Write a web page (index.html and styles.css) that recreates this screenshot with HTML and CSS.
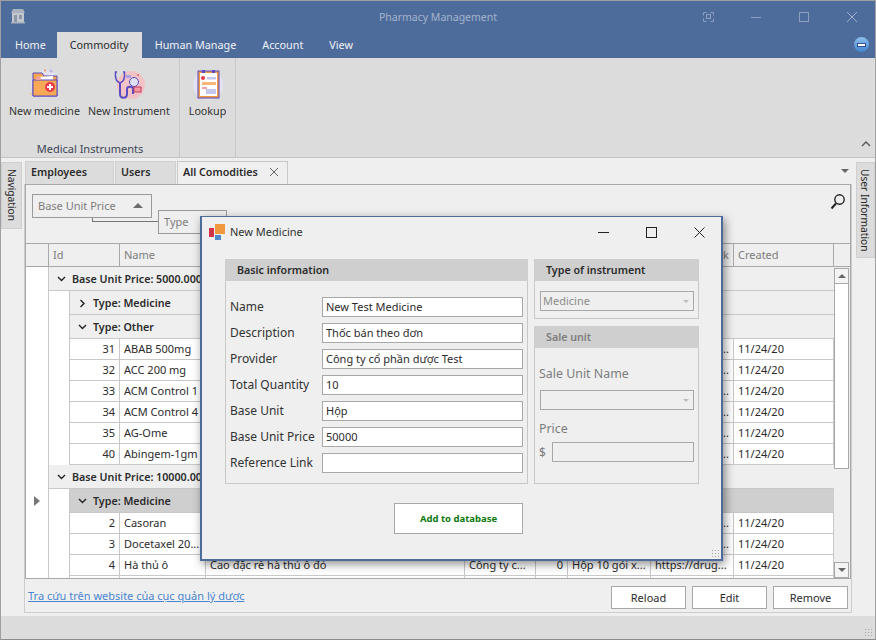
FILE: index.html
```html
<!DOCTYPE html>
<html lang="en">
<head>
    <meta charset="UTF-8">
    <title>Pharmacy Management</title>
    <link rel="stylesheet" href="styles.css">
</head>
<body>
<div class="app">
    <header class="titlebar">
        <svg class="app-icon" width="16" height="16" viewBox="0 0 16 16">
            <path d="M3 1h10l2 4H1z" fill="#a9b2be"/>
            <rect x="2" y="5" width="12" height="9" fill="#c3c8ce"/>
            <rect x="4" y="7" width="3" height="7" fill="#8b97a8"/>
            <rect x="9" y="7" width="3" height="4" fill="#8b97a8"/>
            <rect x="1" y="14" width="14" height="1.5" fill="#a9b2be"/>
        </svg>
        <div class="title">Pharmacy Management</div>
        <div class="win-controls">
            <svg width="48" height="16" viewBox="0 0 48 16" fill="none" stroke="#8c9fbd">
                <path d="M19.500 6.500v-3h3M26.500 3.500h3v3M29.500 9.500v3h-3M22.500 12.500h-3v-3"/>
                <rect x="22.500" y="5.500" width="4" height="4"/>
            </svg>
            <svg width="48" height="16" viewBox="0 0 48 16" fill="none" stroke="#8c9fbd"><path d="M19 8.500h10"/></svg>
            <svg width="48" height="16" viewBox="0 0 48 16" fill="none" stroke="#8c9fbd"><rect x="19.500" y="3.500" width="9" height="9"/></svg>
            <svg width="48" height="16" viewBox="0 0 48 16" fill="none" stroke="#a3b2cb"><path d="M19 3l10 10M29 3L19 13"/></svg>
        </div>
    </header>

    <nav class="menu">
        <a class="menu-item menu-home">Home</a>
        <a class="menu-item active">Commodity</a>
        <a class="menu-item">Human Manage</a>
        <a class="menu-item">Account</a>
        <a class="menu-item">View</a>
        <span class="menu-collapse"><span class="menu-collapse-bar"></span></span>
    </nav>

    <section class="ribbon">
        <div class="ribbon-group group-medical">
            <div class="ribbon-buttons">
                <div class="ribbon-btn btn-medicine">
                    <svg width="32" height="32" viewBox="0 0 32 32">
                        <circle cx="16" cy="15" r="14" fill="#e3e2f0"/>
                        <path d="M4 4h9l2 3h13v20H4z" fill="#f5a34e" stroke="#5a4bc0" stroke-width="1"/>
                        <path d="M8 8l16-1v4H8z" fill="#fff"/>
                        <path d="M4 11h24v16H4z" fill="#f7a958" stroke="#5a4bc0" stroke-width="1"/>
                        <path d="M7 9c1-2 4-2 5 0v2H7z" fill="#f0a0a0"/>
                        <circle cx="21" cy="18" r="5" fill="#e8394b"/>
                        <path d="M21 15v6M18 18h6" stroke="#fff" stroke-width="2"/>
                        <circle cx="22" cy="2" r="1.500" fill="#b9b6e6"/>
                        <circle cx="16" cy="1.500" r="1" fill="#f08b4a"/>
                        <circle cx="1.500" cy="25" r="1" fill="#f5c27e"/>
                    </svg>
                    <span>New medicine</span>
                </div>
                <div class="ribbon-btn btn-instrument">
                    <svg width="32" height="32" viewBox="0 0 32 32">
                        <circle cx="18" cy="16" r="14" fill="#f1c3c6"/>
                        <path d="M4 3H2.500C2 9 3 13 7 14c4-1 5-5 4.500-11H10" fill="none" stroke="#5a4bc0" stroke-width="1.500"/>
                        <path d="M7 14v11c0 5 7 5 7 0v-5c0-3 6-3 6 0v5" fill="none" stroke="#5a4bc0" stroke-width="2"/>
                        <circle cx="21" cy="13" r="4.500" fill="#dfe0f5" stroke="#5a4bc0"/>
                        <rect x="21" y="18" width="7" height="5" fill="#f19aa1" stroke="#c33b60"/>
                        <rect x="13" y="6" width="5" height="3" fill="#a9a4e0"/>
                        <circle cx="25" cy="6" r="1" fill="#e8606c"/>
                    </svg>
                    <span>New Instrument</span>
                </div>
            </div>
            <div class="ribbon-caption">Medical Instruments</div>
        </div>
        <div class="ribbon-group group-lookup">
            <div class="ribbon-btn btn-lookup">
                <svg width="32" height="32" viewBox="0 0 32 32">
                    <circle cx="16" cy="16" r="15" fill="#e2e2f2"/>
                    <rect x="7" y="3" width="19" height="25" fill="#fff" stroke="#f09a45" stroke-width="2"/>
                    <rect x="6" y="2" width="21" height="27" fill="none" stroke="#5a4bc0"/>
                    <rect x="10" y="1" width="3" height="3" fill="#5a4bc0"/>
                    <rect x="20" y="1" width="3" height="3" fill="#5a4bc0"/>
                    <circle cx="11" cy="9" r="2" fill="#e8394b"/>
                    <rect x="15" y="8" width="9" height="2.500" fill="#c4c6ee"/>
                    <rect x="10" y="13" width="14" height="3" fill="#f6b778"/>
                    <rect x="10" y="18" width="5" height="2" fill="#f0a0a0"/>
                    <rect x="14" y="20" width="10" height="5" fill="#c4c6ee"/>
                </svg>
                <span>Lookup</span>
            </div>
        </div>
        <svg class="ribbon-toggle" width="10" height="6" viewBox="0 0 10 6" fill="none" stroke="#555" stroke-width="1.300"><path d="M1 5l4-4 4 4"/></svg>
    </section>

    <main class="workspace">
        <div class="side-tab side-left">Navigation</div>

        <div class="center">
            <div class="doc-tabs">
                <div class="doc-tab tab-employees">Employees</div>
                <div class="doc-tab tab-users">Users</div>
                <div class="doc-tab tab-commodities active">All Comodities
                    <svg width="10" height="10" viewBox="0 0 10 10" fill="none" stroke="#666"><path d="M1 1l8 8M9 1l-8 8"/></svg>
                </div>
                <span class="tabs-menu"></span>
            </div>

            <div class="panel">
                <div class="grid">
                    <div class="filter-area">
                        <div class="chip chip-price">Base Unit Price<span class="sort-up"></span></div>
                        <div class="chip chip-type">Type</div>
                        <span class="chip-link"></span>
                        <svg class="search-icon" width="16" height="17" viewBox="0 0 16 17" fill="none" stroke="#222">
                            <circle cx="9.500" cy="6.500" r="4.700" stroke-width="1.400"/>
                            <path d="M6 10.500l-4.500 5" stroke-width="2"/>
                        </svg>
                    </div>

                    <div class="grid-head">
                        <div class="head-cell col-indicator"></div>
                        <div class="head-cell col-id">Id</div>
                        <div class="head-cell col-name">Name</div>
                        <div class="head-cell col-desc"></div>
                        <div class="head-cell col-provider"></div>
                        <div class="head-cell col-qty"></div>
                        <div class="head-cell col-unit"></div>
                        <div class="head-cell col-link col-link-right">Link</div>
                        <div class="head-cell col-created">Created</div>
                        <div class="head-cell col-end"></div>
                    </div>

                    <div class="grid-body">
                        <div class="indicator"><span class="row-arrow"></span></div>
                        <div class="rows">
                            <div class="group-row"><svg class="chev" width="9" height="6" viewBox="0 0 9 6" fill="none" stroke="#222" stroke-width="1.400"><path d="M1 1l3.500 3.500L8 1"/></svg>Base Unit Price: 5000.000</div>
                            <div class="group-row type-row"><svg class="chev" width="6" height="9" viewBox="0 0 6 9" fill="none" stroke="#222" stroke-width="1.400"><path d="M1 1l3.500 3.500L1 8"/></svg>Type: Medicine</div>
                            <div class="group-row type-row"><svg class="chev" width="9" height="6" viewBox="0 0 9 6" fill="none" stroke="#222" stroke-width="1.400"><path d="M1 1l3.500 3.500L8 1"/></svg>Type: Other</div>
                            <div class="data-row"><span class="num">31</span><span>ABAB 500mg</span><span></span><span></span><span></span><span></span><span class="cut">...</span><span>11/24/20</span></div>
                            <div class="data-row"><span class="num">32</span><span>ACC 200 mg</span><span></span><span></span><span></span><span></span><span class="cut">...</span><span>11/24/20</span></div>
                            <div class="data-row"><span class="num">33</span><span>ACM Control 1</span><span></span><span></span><span></span><span></span><span class="cut">...</span><span>11/24/20</span></div>
                            <div class="data-row"><span class="num">34</span><span>ACM Control 4</span><span></span><span></span><span></span><span></span><span class="cut">...</span><span>11/24/20</span></div>
                            <div class="data-row"><span class="num">35</span><span>AG-Ome</span><span></span><span></span><span></span><span></span><span class="cut">...</span><span>11/24/20</span></div>
                            <div class="data-row"><span class="num">40</span><span>Abingem-1gm</span><span></span><span></span><span></span><span></span><span class="cut">...</span><span>11/24/20</span></div>
                            <div class="group-row"><svg class="chev" width="9" height="6" viewBox="0 0 9 6" fill="none" stroke="#222" stroke-width="1.400"><path d="M1 1l3.500 3.500L8 1"/></svg>Base Unit Price: 10000.000</div>
                            <div class="group-row type-row selected"><svg class="chev" width="9" height="6" viewBox="0 0 9 6" fill="none" stroke="#222" stroke-width="1.400"><path d="M1 1l3.500 3.500L8 1"/></svg>Type: Medicine</div>
                            <div class="data-row"><span class="num">2</span><span>Casoran</span><span></span><span></span><span></span><span></span><span class="cut">...</span><span>11/24/20</span></div>
                            <div class="data-row"><span class="num">3</span><span>Docetaxel 20...</span><span></span><span></span><span></span><span></span><span class="cut">...</span><span>11/24/20</span></div>
                            <div class="data-row"><span class="num">4</span><span>Hà thủ ô</span><span>Cao đặc rễ hà thủ ô đỏ</span><span>Công ty c...</span><span class="num">0</span><span>Hộp 10 gói x...</span><span>https://drug...</span><span>11/24/20</span></div>
                            <div class="data-row"><span class="num"></span><span></span><span></span><span></span><span></span><span></span><span></span><span></span></div>
                        </div>
                        <div class="scrollbar">
                            <div class="scroll-btn"><span class="tri-up"></span></div>
                            <div class="scroll-thumb"></div>
                            <div class="scroll-track"></div>
                            <div class="scroll-btn"><span class="tri-down"></span></div>
                        </div>
                    </div>
                </div>

                <div class="panel-footer">
                    <a class="gov-link">Tra cứu trên website của cục quản lý dược</a>
                    <div class="actions">
                        <button class="btn">Reload</button>
                        <button class="btn">Edit</button>
                        <button class="btn">Remove</button>
                    </div>
                </div>
            </div>
        </div>

        <div class="side-tab side-right">User Information</div>
    </main>

    <footer class="statusbar"><span class="grip"></span></footer>
</div>

<div class="dialog">
    <div class="dialog-title">
        <svg width="17" height="17" viewBox="0 0 17 17">
            <rect x="0" y="4" width="5" height="9" fill="#d0334a"/>
            <rect x="6" y="0" width="10" height="10" fill="#f0983e"/>
            <rect x="6" y="11" width="6" height="5" fill="#4f8bcb"/>
        </svg>
        <span class="dialog-name">New Medicine</span>
        <div class="dialog-controls">
            <svg width="11" height="11" viewBox="0 0 11 11" fill="none" stroke="#222"><path d="M0 5.500h11"/></svg>
            <svg width="11" height="11" viewBox="0 0 11 11" fill="none" stroke="#222"><rect x="0.500" y="0.500" width="10" height="10"/></svg>
            <svg width="11" height="11" viewBox="0 0 11 11" fill="none" stroke="#222"><path d="M0.500 0.500l10 10M10.500 0.500l-10 10"/></svg>
        </div>
    </div>
    <div class="dialog-body">
        <div class="col-main">
            <div class="box box-basic">
                <div class="box-head">Basic information</div>
                <div class="fields">
                    <label class="field"><span>Name</span><input class="input" value="New Test Medicine"></label>
                    <label class="field"><span>Description</span><input class="input" value="Thốc bán theo đơn"></label>
                    <label class="field"><span>Provider</span><input class="input" value="Công ty cổ phần dược Test"></label>
                    <label class="field"><span>Total Quantity</span><input class="input" value="10"></label>
                    <label class="field"><span>Base Unit</span><input class="input" value="Hộp"></label>
                    <label class="field"><span>Base Unit Price</span><input class="input" value="50000"></label>
                    <label class="field"><span>Reference Link</span><input class="input" value=""></label>
                </div>
            </div>
            <button class="btn-add">Add to database</button>
        </div>
        <div class="col-side">
            <div class="box box-type">
                <div class="box-head">Type of instrument</div>
                <div class="box-pad">
                    <div class="select disabled">Medicine<span class="tri-down pale"></span></div>
                </div>
            </div>
            <div class="box box-sale disabled-box">
                <div class="box-head">Sale unit</div>
                <div class="box-pad">
                    <div class="sale-label first">Sale Unit Name</div>
                    <div class="select disabled"><span class="tri-down pale"></span></div>
                    <div class="sale-label">Price</div>
                    <div class="price-row"><span class="currency">$</span><div class="select disabled price-input"></div></div>
                </div>
            </div>
        </div>
    </div>
    <span class="grip dialog-grip"></span>
</div>
</body>
</html>
```

FILE: styles.css
```css
* {
    box-sizing: border-box;
}
html, body {
    margin: 0;
    padding: 0;
    height: 640px;
    overflow: hidden;
}
body {
    font-family: "Noto Sans", "Open Sans", sans-serif;
    font-size: 11px;
    color: #2b2b2b;
    background-color: #efefef;
    position: relative;
}
.app {
    height: 640px;
    display: flex;
    flex-direction: column;
    border: 1px solid #a0a0a0;
    border-bottom-color: #8c8c8c;
}

/* title bar */
.titlebar {
    height: 31px;
    background-color: #4e6c9b;
    display: flex;
    align-items: center;
    position: relative;
    flex: none;
}
.app-icon {
    margin-left: 9px;
    margin-top: -1px;
}
.title {
    position: absolute;
    left: 0;
    right: 0;
    text-align: center;
    color: #a3b3cc;
    font-size: 10.5px;
}
.win-controls {
    margin-left: auto;
    margin-right: -1px;
    display: flex;
}

/* menu */
.menu {
    height: 26px;
    background-color: #4e6c9b;
    display: flex;
    align-items: flex-end;
    padding-left: 1px;
    position: relative;
    flex: none;
}
.menu-item {
    height: 26px;
    line-height: 26px;
    padding: 0 13px;
    color: #eef1f6;
    font-size: 10.8px;
}
.menu-home {
    padding-right: 11px;
}
.menu-item.active {
    background-color: #dcdcdc;
    color: #2b2b2b;
}
.menu-collapse {
    position: absolute;
    right: 6px;
    top: 5px;
    width: 15px;
    height: 15px;
    border-radius: 50%;
    background: linear-gradient(#8fc0ee, #3f84cf);
    display: flex;
    align-items: center;
    justify-content: center;
}
.menu-collapse-bar {
    width: 9px;
    height: 4px;
    background-color: #fff;
    border: 1px solid #33538f;
}

/* ribbon */
.ribbon {
    height: 100px;
    background-color: #dcdcdc;
    border-bottom: 1px solid #c4c4c4;
    display: flex;
    position: relative;
    flex: none;
}
.ribbon-group {
    border-right: 1px solid #c8c8c8;
    display: flex;
    flex-direction: column;
}
.group-medical {
    width: 179px;
}
.group-lookup {
    width: 56px;
}
.ribbon-buttons {
    display: flex;
    padding-left: 8px;
    gap: 8px;
}
.ribbon-btn {
    display: flex;
    flex-direction: column;
    align-items: center;
    padding-top: 11px;
    color: #333;
    font-size: 10.7px;
}
.ribbon-btn span {
    margin-top: 3px;
    white-space: nowrap;
}
.group-lookup .ribbon-btn {
    padding-top: 11px;
}
.ribbon-caption {
    margin-top: auto;
    text-align: center;
    height: 17px;
    line-height: 17px;
    color: #3c4556;
}
.ribbon-toggle {
    position: absolute;
    right: 4px;
    bottom: 10px;
}

/* work area */
.workspace {
    flex: 1;
    display: flex;
    padding-top: 3px;
    min-height: 0;
}
.side-tab {
    writing-mode: vertical-rl;
    background-color: #dcdcdc;
    border: 1px solid #cfcfcf;
    font-size: 10.2px;
    line-height: 18px;
    text-align: center;
    margin-top: 1px;
}
.side-left {
    width: 21px;
    height: 67px;
    margin-right: 2px;
}
.side-right {
    width: 19px;
    height: 96px;
    margin-left: 4px;
}
.center {
    width: 828px;
    display: flex;
    flex-direction: column;
    padding-bottom: 3px;
}
.doc-tabs {
    height: 23px;
    display: flex;
    padding-left: 1px;
    position: relative;
    flex: none;
}
.doc-tab {
    background-color: #dcdcdc;
    border: 1px solid #cfcfcf;
    border-bottom: none;
    margin-right: 1px;
    font-weight: 600;
    font-size: 10.7px;
    line-height: 20px;
    padding-left: 5px;
    color: #2b2b2b;
}
.tab-employees {
    width: 89px;
}
.tab-users {
    width: 61px;
}
.tab-commodities {
    width: 111px;
    background-color: #efefef;
    display: flex;
    align-items: center;
    gap: 11px;
    border-color: #c8c8c8;
    height: 23px;
    padding-bottom: 2px;
}
.tabs-menu {
    position: absolute;
    right: 3px;
    top: 8px;
    border: 4px solid transparent;
    border-top-color: #666;
    border-bottom: 0;
}
.panel {
    flex: 1;
    border: 1px solid #cdcdcd;
    border-top: none;
    display: flex;
    flex-direction: column;
    min-height: 0;
}
.grid {
    height: 395px;
    border: 1px solid #a8a8a8;
    display: flex;
    flex-direction: column;
}

/* filter chips */
.filter-area {
    height: 58px;
    position: relative;
    display: flex;
    align-items: flex-start;
    padding: 9px 0 0 6px;
    gap: 6px;
    flex: none;
}
.chip {
    height: 24px;
    line-height: 22px;
    border: 1px solid #9a9a9a;
    color: #7d7d7d;
    padding-left: 5px;
    background-color: #efefef;
}
.chip-price {
    width: 120px;
    position: relative;
    z-index: 1;
}
.chip-type {
    width: 69px;
    margin-top: 16px;
}
.sort-up {
    position: absolute;
    right: 8px;
    top: 8px;
    border: 5px solid transparent;
    border-bottom: 5px solid #6c6c6c;
    border-top: 0;
}
.chip-link {
    position: absolute;
    left: 66px;
    top: 32px;
    width: 66px;
    height: 5px;
    border-left: 1px solid #777;
    border-bottom: 1px solid #777;
}
.search-icon {
    position: absolute;
    right: 4px;
    top: 8px;
}

/* grid */
.grid-head {
    height: 24px;
    display: flex;
    flex: none;
    border-top: 1px solid #a8a8a8;
    border-bottom: 1px solid #a8a8a8;
}
.head-cell {
    border-right: 1px solid #a8a8a8;
    padding-left: 4px;
    line-height: 21px;
    color: #7d7d7d;
    overflow: hidden;
    white-space: nowrap;
}
.col-indicator {
    width: 23px;
}
.col-id {
    width: 71px;
}
.col-name {
    width: 86px;
}
.col-desc {
    width: 259px;
}
.col-provider {
    width: 71px;
}
.col-qty {
    width: 32px;
}
.col-unit {
    width: 83px;
}
.col-link {
    width: 83px;
}
.col-link-right {
    text-align: right;
    padding-right: 4px;
}
.col-created {
    width: 100px;
}
.col-end {
    width: 16px;
    border-right: none;
}
.grid-body {
    flex: 1;
    display: flex;
    min-height: 0;
    overflow: hidden;
}
.indicator {
    width: 23px;
    flex: none;
    background-color: #fff;
    border-right: 1px solid #c8c8c8;
    padding: 229px 0 0 8px;
}
.row-arrow {
    display: block;
    border: 5px solid transparent;
    border-left: 6px solid #777;
    border-right: 0;
    width: 0;
}
.rows {
    width: 785px;
    flex: none;
    background-color: #fff;
    overflow: hidden;
}
.group-row {
    height: 24px;
    padding-top: 1px;
    background-color: #efefef;
    border-bottom: 1px solid #c8c8c8;
    font-weight: 600;
    font-size: 10.7px;
    display: flex;
    align-items: center;
    white-space: nowrap;
    color: #2b2b2b;
}
.group-row .chev {
    width: 9px;
    margin: 0 6px 0 8px;
}
.type-row {
    margin-left: 20px;
    border-left: 1px solid #c8c8c8;
}
.type-row.selected {
    background-color: #cfcfcf;
}
.data-row {
    margin-left: 20px;
    height: 21px;
    display: grid;
    grid-template-columns: 50px 86px 259px 71px 32px 83px 83px 100px;
    border-bottom: 1px solid #c8c8c8;
    border-left: 1px solid #c8c8c8;
    line-height: 19px;
}
.data-row span {
    padding: 0 4px;
    border-right: 1px solid #c8c8c8;
    overflow: hidden;
    white-space: nowrap;
}
.data-row .num {
    text-align: right;
}
.data-row .cut {
    text-align: right;
}
.scrollbar {
    width: 15px;
    flex: none;
    margin-top: 1px;
    display: flex;
    flex-direction: column;
}
.scroll-btn {
    height: 16px;
    border: 1px solid #a8a8a8;
    background-color: #f4f4f4;
    display: flex;
    align-items: center;
    justify-content: center;
    flex: none;
}
.scroll-thumb {
    height: 185px;
    background-color: #fff;
    border: 1px solid #a8a8a8;
    border-top: none;
    flex: none;
}
.scroll-track {
    flex: 1;
}
.tri-up {
    border: 4px solid transparent;
    border-bottom: 4px solid #666;
    border-top: 0;
}
.tri-down {
    border: 4px solid transparent;
    border-top: 4px solid #666;
    border-bottom: 0;
}
.tri-down.pale {
    border-width: 3px 3.5px 0;
    border-top-color: #bdbdbd;
    position: absolute;
    right: 4px;
    top: 8px;
}

/* footer of panel */
.panel-footer {
    flex: 1;
    display: flex;
    align-items: flex-start;
    padding: 7px 3px 0 3px;
}
.gov-link {
    color: #4a86cf;
    text-decoration: underline;
    margin-top: 2px;
}
.actions {
    margin-left: auto;
    display: flex;
    gap: 6px;
}
.btn {
    width: 75px;
    height: 23px;
    background-color: #fff;
    border: 1px solid #a8a8a8;
    font-family: inherit;
    font-size: 11px;
    color: #2b2b2b;
    padding: 0;
}
.statusbar {
    height: 23px;
    background-color: #dcdcdc;
    flex: none;
    position: relative;
}
.grip {
    position: absolute;
    right: 2px;
    bottom: 2px;
    width: 9px;
    height: 9px;
    background-image: radial-gradient(#a8a8a8 1px, transparent 1px);
    background-size: 3px 3px;
}

/* new medicine window */
.dialog {
    position: absolute;
    left: 200px;
    top: 216px;
    width: 523px;
    height: 345px;
    background-color: #efefef;
    border: 2px solid #4e6c9b;
    border-top-width: 1px;
    box-shadow: 2px 3px 9px rgba(0, 0, 0, 0.45);
    display: flex;
    flex-direction: column;
}
.dialog-title {
    height: 30px;
    display: flex;
    align-items: center;
    padding-left: 7px;
    flex: none;
}
.dialog-name {
    margin: 0 0 2px 4px;
    color: #333;
}
.dialog-controls {
    margin-left: auto;
    display: flex;
    gap: 37px;
    padding-right: 16px;
}
.dialog-controls svg {
    display: block;
}
.dialog-body {
    display: flex;
    padding: 12px 0 0 23px;
    gap: 6px;
}
.col-main {
    width: 303px;
    display: flex;
    flex-direction: column;
}
.col-side {
    width: 165px;
    display: flex;
    flex-direction: column;
    gap: 7px;
}
.box {
    border: 1px solid #c8c8c8;
}
.box-basic {
    height: 225px;
}
.box-head {
    height: 22px;
    line-height: 23px;
    background-color: #cfcfcf;
    font-weight: 600;
    font-size: 10.7px;
    padding-left: 12px;
    margin: -1px -1px 0;
    color: #2b2b2b;
}
.fields {
    padding: 16px 4px 0;
    display: flex;
    flex-direction: column;
    gap: 6px;
}
.field {
    display: flex;
    align-items: center;
    height: 20px;
}
.field span {
    width: 92px;
    flex: none;
    font-size: 12px;
    line-height: 18px;
    white-space: nowrap;
    color: #333;
}
.input {
    width: 201px;
    height: 20px;
    border: 1px solid #a8a8a8;
    background-color: #fff;
    font-family: inherit;
    font-size: 11px;
    padding: 0 3px 2px;
    color: #2b2b2b;
}
.btn-add {
    width: 129px;
    height: 31px;
    margin: 19px 5px 0 auto;
    background-color: #fff;
    border: 1px solid #a8a8a8;
    color: #0b7a0b;
    font-family: inherit;
    font-size: 9.5px;
    font-weight: 700;
    padding: 0;
}
.box-type {
    height: 60px;
}
.box-pad {
    padding: 10px 4px 0 5px;
}
.select {
    height: 20px;
    border: 1px solid #a8a8a8;
    line-height: 18px;
    padding-left: 2px;
    position: relative;
}
.select.disabled {
    color: #8c8c8c;
}
.box-sale {
    height: 158px;
}
.disabled-box .box-head {
    color: #7d7d7d;
}
.sale-label {
    color: #7d7d7d;
    font-size: 12.4px;
    height: 17px;
    line-height: 17px;
    margin: 10px 0 4px -1px;
}
.sale-label.first {
    margin-top: 7px;
    margin-bottom: 8px;
}
.price-row {
    display: flex;
    align-items: center;
    gap: 7px;
    margin-top: 5px;
    margin-left: -1px;
}
.currency {
    color: #7d7d7d;
    width: 6px;
    font-size: 12px;
}
.price-input {
    flex: 1;
}
.dialog-grip {
    right: 1px;
    bottom: 1px;
}
```
